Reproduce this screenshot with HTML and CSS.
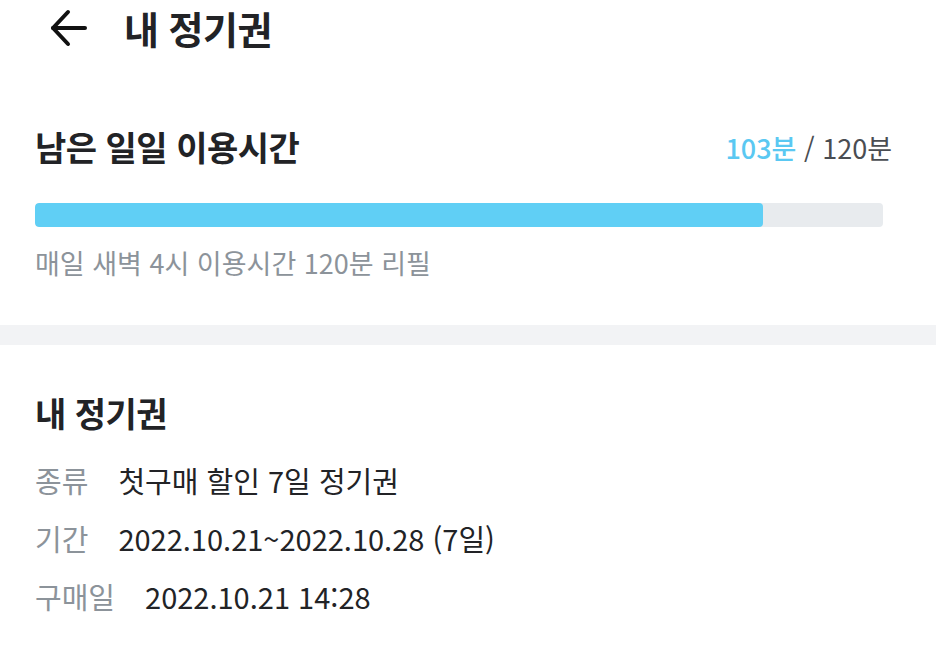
FILE: index.html
```html
<!DOCTYPE html>
<html lang="ko">
<head>
  <meta charset="UTF-8">
  <meta name="viewport" content="width=device-width, initial-scale=1.0">
  <title>내 정기권</title>
  <link rel="stylesheet" href="styles.css">
</head>
<body>
<div class="app">
  <div class="top-bar">
    <button class="back-btn" aria-label="뒤로">
      <svg width="38" height="38" viewBox="0 0 38 38" fill="none" stroke="#111" stroke-width="4" stroke-linecap="round" stroke-linejoin="round">
        <path d="M35 19H3"/>
        <path d="M18 3L3 19l15 16"/>
      </svg>
    </button>
    <h1 class="page-title">내 정기권</h1>
  </div>

  <section class="usage">
    <div class="usage-head">
      <h2 class="section-title">남은 일일 이용시간</h2>
      <div class="usage-count"><span class="remain">103분</span> / 120분</div>
    </div>
    <div class="progress">
      <div class="progress-fill" style="width: 85.8%"></div>
    </div>
    <div class="usage-note">매일 새벽 4시 이용시간 120분 리필</div>
  </section>

  <div class="divider"></div>

  <section class="pass">
    <h2 class="section-title">내 정기권</h2>
    <div class="info-row">
      <span class="info-label">종류</span>
      <span class="info-value">첫구매 할인 7일 정기권</span>
    </div>
    <div class="info-row">
      <span class="info-label">기간</span>
      <span class="info-value">2022.10.21~2022.10.28 (7일)</span>
    </div>
    <div class="info-row">
      <span class="info-label">구매일</span>
      <span class="info-value">2022.10.21 14:28</span>
    </div>
  </section>
</div>
</body>
</html>
```

FILE: styles.css
```css
* {
  margin: 0;
  padding: 0;
  box-sizing: border-box;
  font-family: "Noto Sans CJK KR", "Noto Sans", sans-serif;
}

body {
  background-color: #fff;
  color: #222326;
  width: 936px;
  height: 655px;
  overflow: hidden;
}

.top-bar {
  display: flex;
  align-items: center;
  height: 56px;
  padding-left: 50px;
}

.back-btn {
  border: none;
  background: none;
  display: flex;
  margin-right: 36px;
}

.page-title {
  font-size: 38px;
  font-weight: 700;
  line-height: 56px;
  letter-spacing: -0.5px;
}

.usage {
  padding: 62px 53px 0 35px;
  height: 269px;
}

.usage-head {
  display: flex;
  justify-content: space-between;
  align-items: center;
}

.section-title {
  font-size: 34px;
  font-weight: 700;
  letter-spacing: -0.5px;
  line-height: 58px;
}

.usage-count {
  font-size: 27px;
  color: #4a4d52;
  margin-right: -9px;
}

.remain {
  color: #5ac8f2;
  font-weight: 500;
}

.progress {
  height: 24px;
  background-color: #e8ebee;
  border-radius: 4px;
  margin-top: 27px;
  overflow: hidden;
}

.progress-fill {
  height: 100%;
  background-color: #60cff5;
  border-radius: 4px;
}

.usage-note {
  font-size: 27px;
  line-height: 40px;
  color: #8c939a;
  margin-top: 16px;
}

.divider {
  height: 20px;
  background-color: #f2f3f5;
}

.pass {
  padding: 39px 35px 0;
}

.pass .section-title {
  margin-bottom: 9px;
}

.info-row {
  display: flex;
  align-items: center;
  height: 58px;
  font-size: 29px;
}

.info-label {
  color: #8c939a;
  margin-right: 30px;
}

.info-value {
  color: #222326;
}
```
